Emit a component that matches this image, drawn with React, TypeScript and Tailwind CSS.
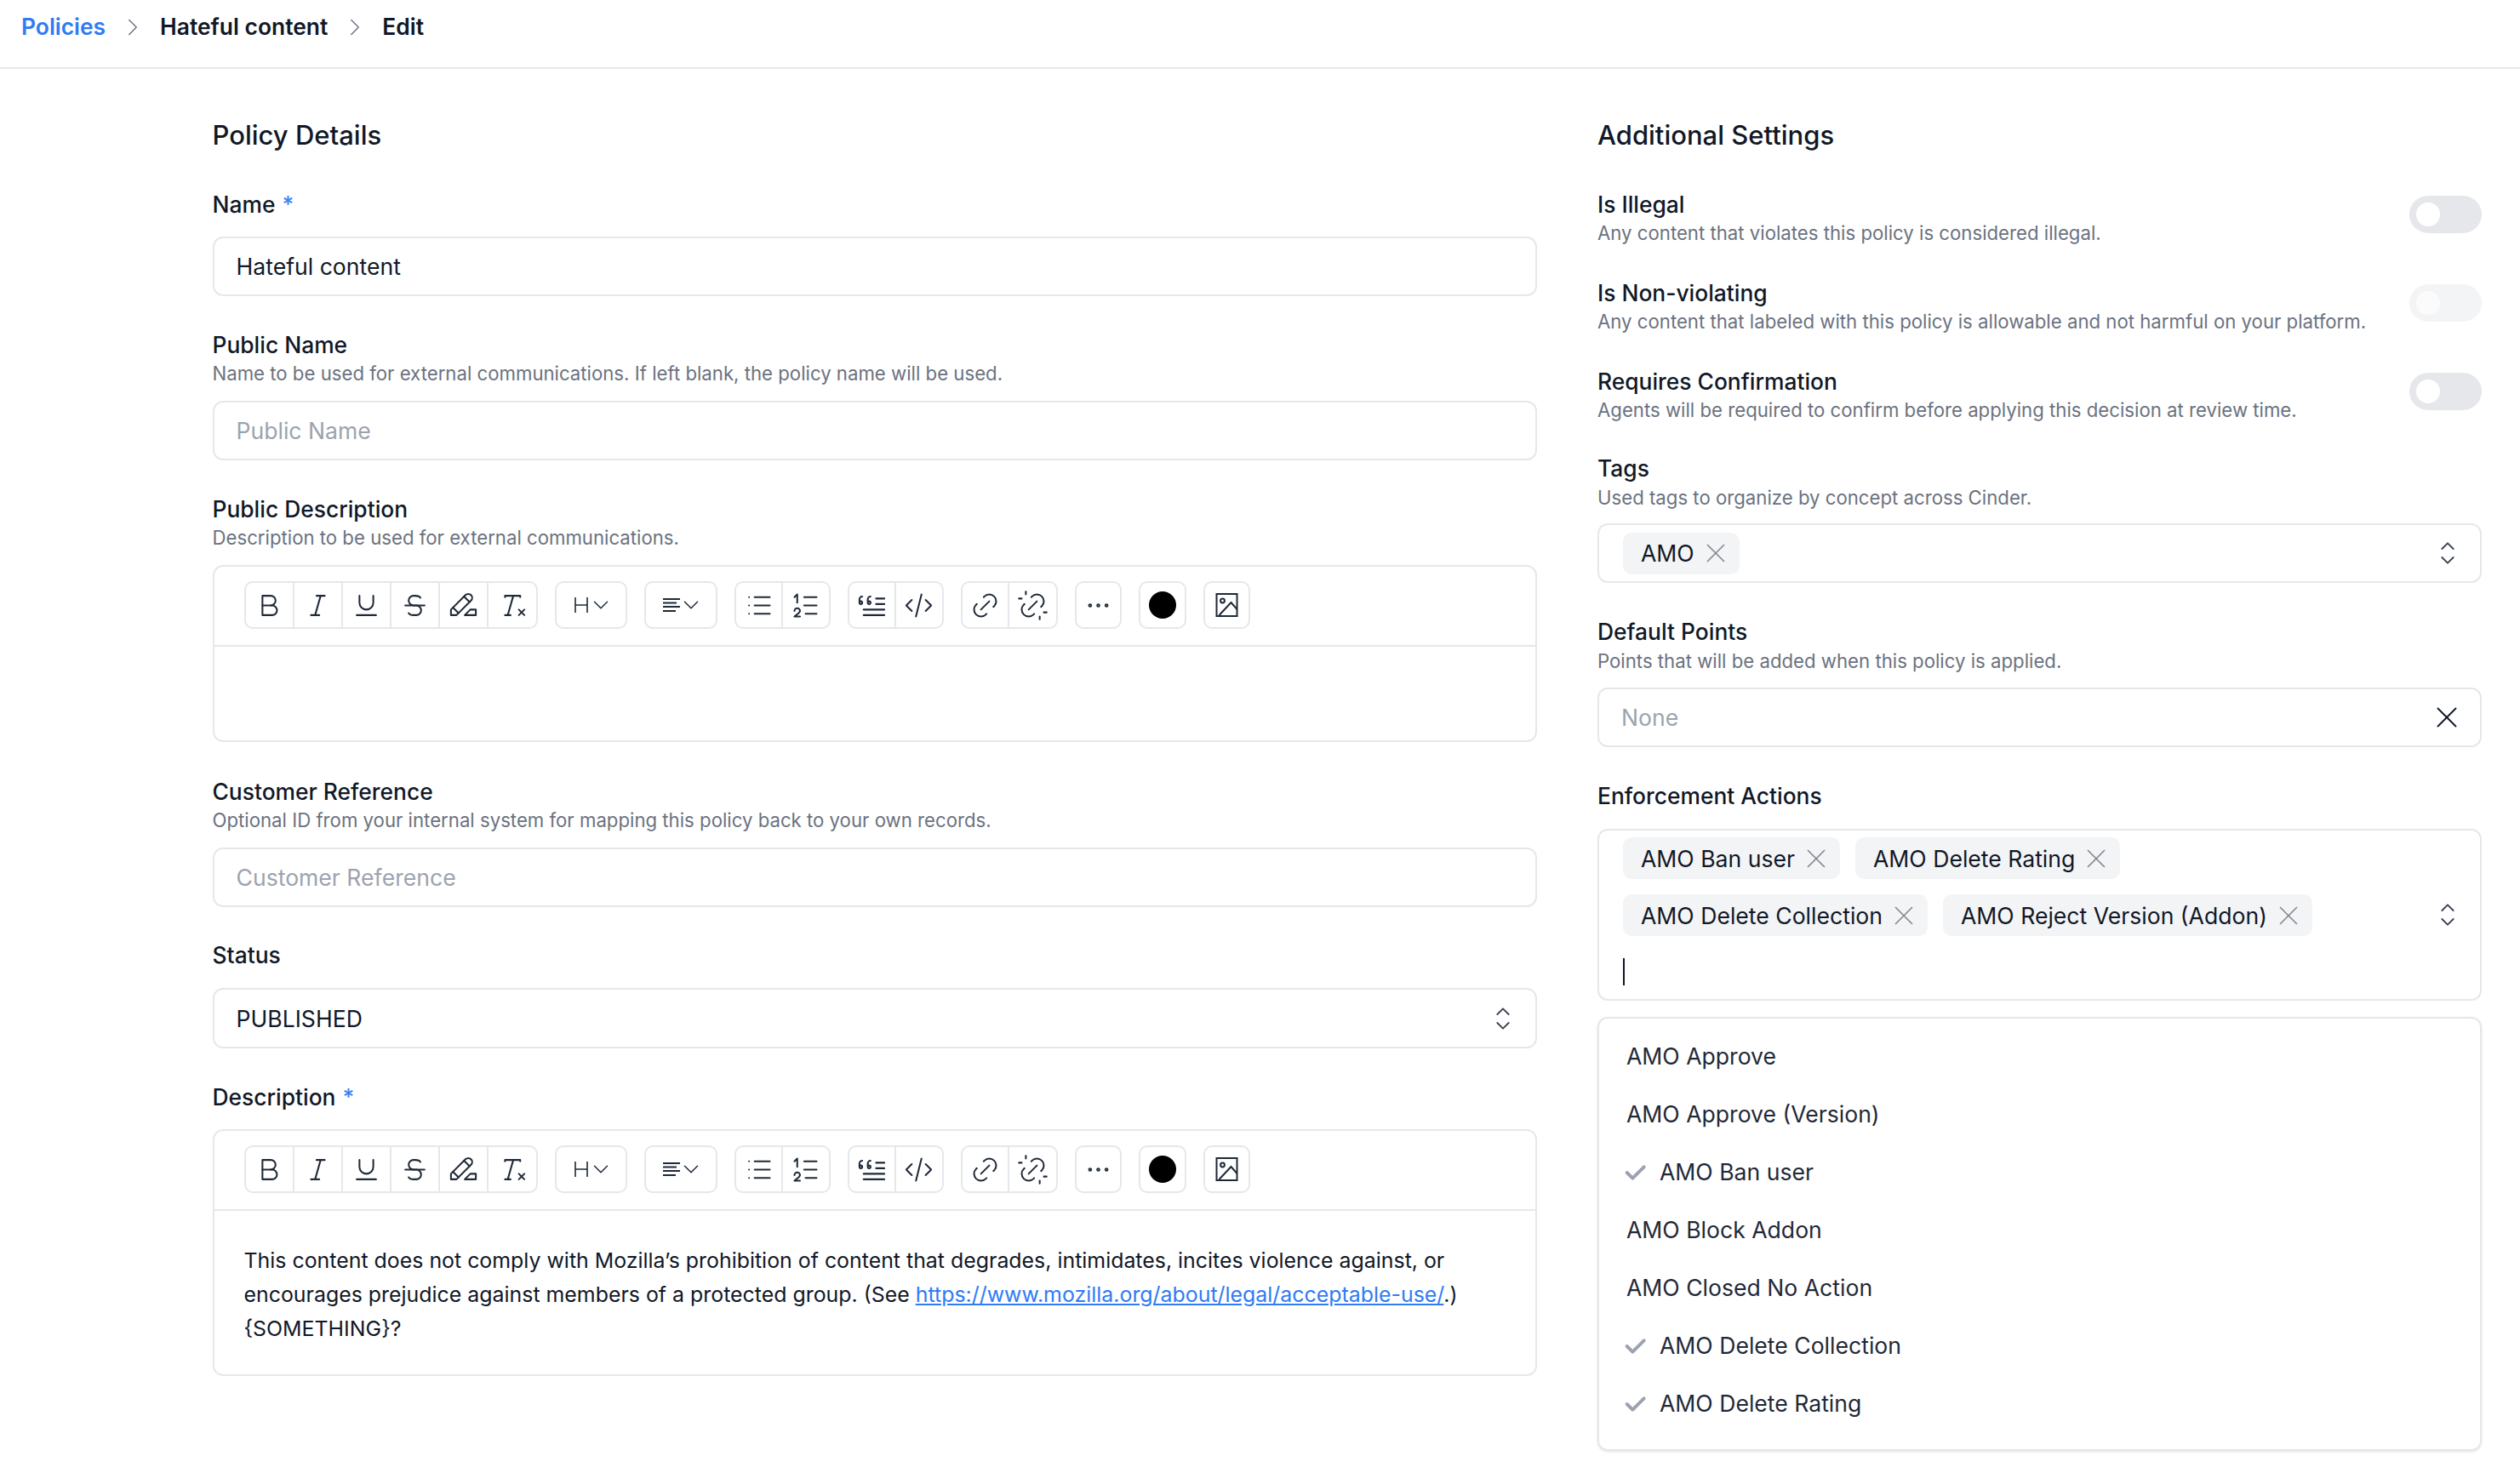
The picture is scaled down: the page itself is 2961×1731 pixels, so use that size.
import type { ReactNode } from "react";
import {
  TbBlockquote,
  TbBold,
  TbCheck,
  TbChevronDown,
  TbChevronRight,
  TbClearFormatting,
  TbCode,
  TbDots,
  TbHighlight,
  TbItalic,
  TbLink,
  TbList,
  TbListNumbers,
  TbSelector,
  TbStrikethrough,
  TbUnderline,
  TbUnlink,
  TbX,
} from "react-icons/tb";

const icon = "w-[39px] h-[39px] text-[#1f2937]";
const sw = 1.25;

function ImageIcon() {
  return (
    <svg viewBox="0 0 26 28" fill="none" stroke="#1f2937" strokeWidth="2" className="w-[27px] h-[28px]">
      <rect x="1" y="1" width="24" height="26" />
      <circle cx="8" cy="9" r="2.4" />
      <path d="M4 26 L18 11 L25 19" />
    </svg>
  );
}

function HeadingIcon() {
  return (
    <svg viewBox="0 0 16 18" fill="none" stroke="#1f2937" strokeWidth="1.6" className="w-[16px] h-[18px]">
      <path d="M1 0 V18 M15 0 V18 M1 9 H15" />
    </svg>
  );
}

function AlignIcon() {
  return (
    <svg viewBox="0 0 20 16" fill="none" stroke="#1f2937" strokeWidth="2" className="w-[20px] h-[16px]">
      <path d="M0 1 H20 M0 5.5 H16 M0 10 H20 M0 15 H15" />
    </svg>
  );
}

function Label({ children, required }: { children: ReactNode; required?: boolean }) {
  return (
    <div className="text-[26.4px] leading-[38px] font-medium text-[#111827]">
      {children}
      {required && <span className="text-[#3b82f6] ml-[8px]">*</span>}
    </div>
  );
}

function Hint({ children }: { children: ReactNode }) {
  return <div className="text-[22.2px] leading-[30px] text-[#6b7280]">{children}</div>;
}

function TextBox({ value, placeholder, h = "h-[70px]", children }: { value?: string; placeholder?: string; h?: string; children?: ReactNode }) {
  return (
    <div className={`${h} border-2 border-[#e5e7eb] rounded-[12px] flex items-center justify-between pl-[26px] pr-[18px] text-[26.6px] bg-white`}>
      {value ? <span className="text-[#111827] pt-[2px]">{value}</span> : <span className="text-[#9ca3af] pt-[2px]">{placeholder}</span>}
      {children}
    </div>
  );
}

function Chip({ label }: { label: string }) {
  return (
    <div className="h-[49px] bg-[#f3f4f6] rounded-[10px] flex items-center pl-[21px] pr-[9px] text-[26.6px] text-[#111827]">
      <span className="pt-[2px]">{label}</span>
      <TbX className="w-[38px] h-[38px] ml-[6px] text-[#858a94]" strokeWidth={1.1} />
    </div>
  );
}

function BtnGroup({ children }: { children: ReactNode }) {
  return <div className="flex h-[56px] border-2 border-[#e5e7eb] rounded-[10px] divide-x-2 divide-[#e5e7eb]">{children}</div>;
}

function Btn({ children, w = "w-[55px]" }: { children: ReactNode; w?: string }) {
  return <div className={`${w} h-full flex items-center justify-center`}>{children}</div>;
}

function Toolbar() {
  return (
    <div className="h-[94px] border-b-2 border-[#e5e7eb] pl-[35px] pt-[17px] flex gap-[20px]">
      <BtnGroup>
        <Btn w="w-[57px]"><TbBold className={icon} strokeWidth={sw} /></Btn>
        <Btn w="w-[57px]"><TbItalic className={icon} strokeWidth={sw} /></Btn>
        <Btn w="w-[57px]"><TbUnderline className={icon} strokeWidth={sw} /></Btn>
        <Btn w="w-[57px]"><TbStrikethrough className={icon} strokeWidth={sw} /></Btn>
        <Btn w="w-[57px]"><TbHighlight className={icon} strokeWidth={sw} /></Btn>
        <Btn w="w-[56px]"><TbClearFormatting className={icon} strokeWidth={sw} /></Btn>
      </BtnGroup>
      <BtnGroup>
        <Btn w="w-[81px]">
          <span className="ml-[8px] flex items-center">
            <HeadingIcon />
            <TbChevronDown className="w-[30px] h-[30px] text-[#1f2937]" strokeWidth={1.2} />
          </span>
        </Btn>
      </BtnGroup>
      <BtnGroup>
        <Btn w="w-[82px]">
          <span className="ml-[6px] flex items-center">
            <AlignIcon />
            <TbChevronDown className="w-[30px] h-[30px] -ml-[2px] text-[#1f2937]" strokeWidth={1.2} />
          </span>
        </Btn>
      </BtnGroup>
      <BtnGroup>
        <Btn><TbList className={icon} strokeWidth={sw} /></Btn>
        <Btn w="w-[54px]"><TbListNumbers className={icon} strokeWidth={sw} /></Btn>
      </BtnGroup>
      <BtnGroup>
        <Btn><TbBlockquote className={icon} strokeWidth={sw} /></Btn>
        <Btn w="w-[54px]"><TbCode className={icon} strokeWidth={sw} /></Btn>
      </BtnGroup>
      <BtnGroup>
        <Btn><TbLink className={icon} strokeWidth={sw} /></Btn>
        <Btn><TbUnlink className={icon} strokeWidth={sw} /></Btn>
      </BtnGroup>
      <BtnGroup>
        <Btn w="w-[51px]"><TbDots className="w-[33px] h-[33px] text-[#1f2937]" strokeWidth={1.4} /></Btn>
      </BtnGroup>
      <BtnGroup>
        <Btn w="w-[52px]"><div className="w-[32px] h-[32px] rounded-full bg-black" /></Btn>
      </BtnGroup>
      <BtnGroup>
        <Btn w="w-[51px]"><ImageIcon /></Btn>
      </BtnGroup>
    </div>
  );
}

function Toggle({ disabled }: { disabled?: boolean }) {
  return (
    <div className={`w-[85px] h-[44px] rounded-full flex items-center pl-[8px] ${disabled ? "bg-[#f3f4f6]" : "bg-[#e5e7eb]"}`}>
      <div className={`w-[28px] h-[28px] rounded-full ${disabled ? "bg-[#fbfbfb]" : "bg-white"}`} />
    </div>
  );
}

function ToggleRow({ label, hint, disabled }: { label: string; hint: string; disabled?: boolean }) {
  return (
    <div className="flex justify-between items-start h-[67.8px]">
      <div>
        <Label>{label}</Label>
        <Hint>{hint}</Hint>
      </div>
      <div className="mt-[9px]"><Toggle disabled={disabled} /></div>
    </div>
  );
}

const options: [string, boolean][] = [
  ["AMO Approve", false],
  ["AMO Approve (Version)", false],
  ["AMO Ban user", true],
  ["AMO Block Addon", false],
  ["AMO Closed No Action", false],
  ["AMO Delete Collection", true],
  ["AMO Delete Rating", true],
];

const selector = "w-[40px] h-[40px] text-[#374151] shrink-0";

export default function App() {
  return (
    <div className="w-[2961px] h-[1731px] overflow-hidden bg-white font-['Inter',sans-serif]">
      <div className="h-[81px] border-b-2 border-[#e5e7eb] flex items-center pl-[25px] pb-[16px] text-[26.4px] font-semibold text-[#111827]">
        <span className="text-[#2f7bf5]">Policies</span>
        <TbChevronRight className="w-[34px] h-[34px] mx-[15px] text-[#6b7280]" strokeWidth={1} />
        <span>Hateful content</span>
        <TbChevronRight className="w-[34px] h-[34px] mx-[15px] text-[#6b7280]" strokeWidth={1} />
        <span>Edit</span>
      </div>

      <div className="flex pl-[249.5px] pt-[55px] gap-[71px]">
        <div className="w-[1556.5px]">
          <h2 className="text-[31px] leading-[45px] font-medium text-[#111827] mb-[40px]">Policy Details</h2>

          <Label required>Name</Label>
          <div className="mt-[19px]"><TextBox value="Hateful content" h="h-[70px]" /></div>

          <div className="mt-[38px]"><Label>Public Name</Label></div>
          <Hint>Name to be used for external communications. If left blank, the policy name will be used.</Hint>
          <div className="mt-[17px]"><TextBox placeholder="Public Name" /></div>

          <div className="mt-[38px]"><Label>Public Description</Label></div>
          <Hint>Description to be used for external communications.</Hint>
          <div className="mt-[17px] h-[208px] border-2 border-[#e5e7eb] rounded-[12px]"><Toolbar /></div>

          <div className="mt-[39px]"><Label>Customer Reference</Label></div>
          <Hint>Optional ID from your internal system for mapping this policy back to your own records.</Hint>
          <div className="mt-[17px]"><TextBox placeholder="Customer Reference" /></div>

          <div className="mt-[37px]"><Label>Status</Label></div>
          <div className="mt-[20px]">
            <TextBox value="PUBLISHED" h="h-[71px]"><TbSelector className={selector} strokeWidth={1.1} /></TextBox>
          </div>

          <div className="mt-[38px]"><Label required>Description</Label></div>
          <div className="mt-[19px] h-[290px] border-2 border-[#e5e7eb] rounded-[12px]">
            <Toolbar />
            <div className="pl-[35px] pr-[40px] pt-[38px] text-[24.9px] leading-[40px] text-[#111827]">
              This content does not comply with Mozilla’s prohibition of content that degrades, intimidates, incites violence against, or encourages prejudice against members of a protected group. (See{" "}
              <a className="text-[#2f7bf5] underline">https://www.mozilla.org/about/legal/acceptable-use/</a>.)
              <br />
              {"{SOMETHING}"}?
            </div>
          </div>
        </div>

        <div className="w-[1039px]">
          <h2 className="text-[31px] leading-[45px] font-medium text-[#111827] mb-[40px]">Additional Settings</h2>

          <div className="flex flex-col gap-[36px]">
            <ToggleRow label="Is Illegal" hint="Any content that violates this policy is considered illegal." />
            <ToggleRow label="Is Non-violating" hint="Any content that labeled with this policy is allowable and not harmful on your platform." disabled />
            <ToggleRow label="Requires Confirmation" hint="Agents will be required to confirm before applying this decision at review time." />
          </div>

          <div className="mt-[35px]"><Label>Tags</Label></div>
          <div className="mt-[1px]"><Hint>Used tags to organize by concept across Cinder.</Hint></div>
          <div className="mt-[15px] h-[70px] border-2 border-[#e5e7eb] rounded-[12px] flex items-center justify-between pl-[28px] pr-[18px]">
            <Chip label="AMO" />
            <TbSelector className={selector} strokeWidth={1.1} />
          </div>

          <div className="mt-[38px]"><Label>Default Points</Label></div>
          <div className="mt-[1px]"><Hint>Points that will be added when this policy is applied.</Hint></div>
          <div className="mt-[16px]">
            <TextBox placeholder="None" h="h-[70px]"><TbX className="w-[42px] h-[42px] text-[#111827]" strokeWidth={1.1} /></TextBox>
          </div>

          <div className="mt-[38px]"><Label>Enforcement Actions</Label></div>
          <div className="mt-[20px] h-[202px] border-2 border-[#e5e7eb] rounded-[12px] flex justify-between items-center pl-[28px] pr-[18px]">
            <div className="self-start mt-[8px]">
              <div className="flex gap-[18px]">
                <Chip label="AMO Ban user" />
                <Chip label="AMO Delete Rating" />
              </div>
              <div className="flex gap-[18px] mt-[18px]">
                <Chip label="AMO Delete Collection" />
                <Chip label="AMO Reject Version (Addon)" />
              </div>
              <div className="mt-[26px] w-[2px] h-[32px] bg-[#111827]" />
            </div>
            <TbSelector className={selector} strokeWidth={1.1} />
          </div>

          <div className="mt-[19px] h-[510px] border-2 border-[#e5e7eb] rounded-[12px] shadow-sm pt-[11px] pl-[32px]">
            {options.map(([name, checked]) => (
              <div key={name} className="h-[68px] flex items-center text-[26.6px] text-[#1f2937]">
                {checked && <TbCheck className="w-[32px] h-[32px] -ml-[6px] mr-[13px] text-[#9ca3af]" strokeWidth={3} />}
                {name}
              </div>
            ))}
          </div>
        </div>
      </div>
    </div>
  );
}
